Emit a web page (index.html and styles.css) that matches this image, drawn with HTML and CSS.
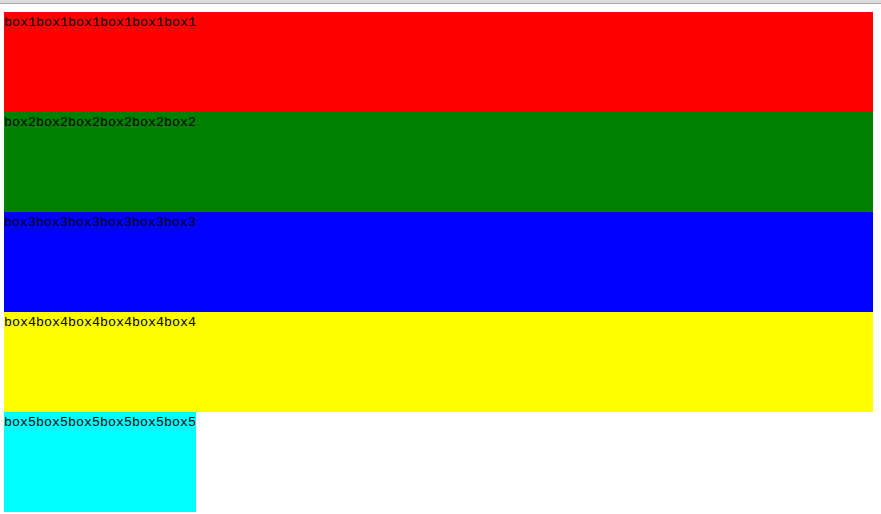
FILE: index.html
```html
<!DOCTYPE html>
<html>
<head>
<meta charset="utf-8">
<link rel="stylesheet" href="styles.css">
</head>
<body>
<div class="topbar"></div>
<div class="page">
  <div class="box box1">box1box1box1box1box1box1</div>
  <div class="box box2">box2box2box2box2box2box2</div>
  <div class="box box3">box3box3box3box3box3box3</div>
  <div class="box box4">box4box4box4box4box4box4</div>
  <div class="box box5">box5box5box5box5box5box5</div>
</div>
</body>
</html>
```
FILE: styles.css
```css
html, body {
  margin: 0;
  padding: 0;
  background: #ffffff;
  overflow: hidden;
}
.topbar {
  height: 3px;
  background: #dcdcdc;
  border-bottom: 1px solid #a8a8a8;
}
.page {
  padding: 8px 8px 0 4px;
  display: flex;
  flex-direction: column;
  align-items: stretch;
}
.box {
  height: 100px;
  font-family: "Liberation Mono", "DejaVu Sans Mono", monospace;
  font-size: 13.333px;
  line-height: 22px;
  color: #000;
  white-space: nowrap;
}
.box1 { background: #ff0000; }
.box2 { background: #008000; }
.box3 { background: #0000ff; }
.box4 { background: #ffff00; }
.box5 { background: #00ffff; align-self: flex-start; }
```
